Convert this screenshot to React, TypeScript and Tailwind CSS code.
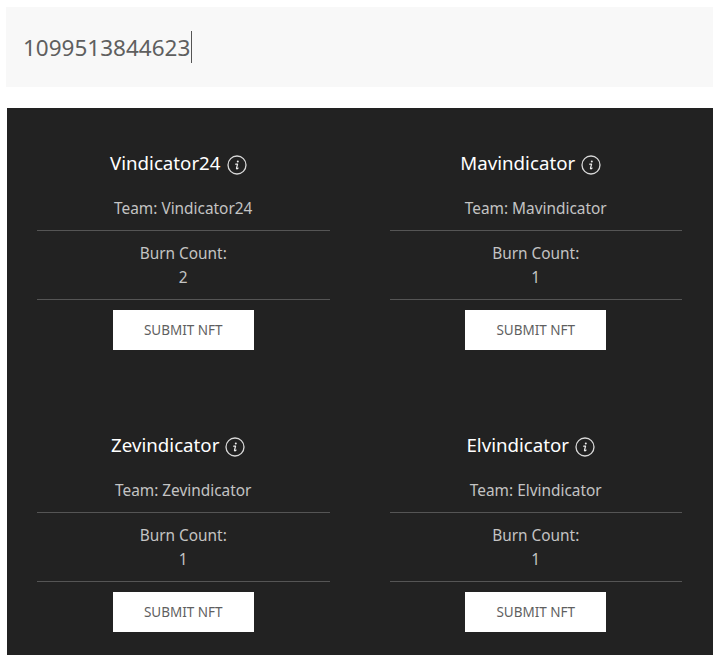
const font = "font-['Noto_Sans',sans-serif]";

function InfoIcon() {
  return (
    <svg width="20" height="20" viewBox="0 0 20 20" fill="none" className="mt-[3px] shrink-0">
      <circle cx="10" cy="10" r="9" stroke="#d8d8d8" strokeWidth="1.3" />
      <circle cx="10.8" cy="6.4" r="1" fill="#eeeeee" />
      <path d="M8.7 9.2h1.9l-1.1 3.9c-.1.5.1.7.4.7.4 0 .8-.3 1.1-.7" stroke="#eeeeee" strokeWidth="1.2" strokeLinecap="round" strokeLinejoin="round" />
    </svg>
  );
}

function Card({ name, count }: { name: string; count: number }) {
  return (
    <div className="flex flex-col items-center">
      <div className="flex h-[30px] items-center gap-[6px] pr-[10px]">
        <span className="text-[18.7px] leading-[30px] text-white">{name}</span>
        <InfoIcon />
      </div>
      <div className="mt-[15px] h-[38px] w-full border-b border-[#555] text-center text-[15.4px] leading-[32px] text-[#c4c4c4]">
        Team: {name}
      </div>
      <div className="w-full border-b border-[#555] pb-[9px] pt-[11px] text-center text-[15.4px] leading-[24px] text-[#c4c4c4]">
        <div>Burn Count:</div>
        <div>{count}</div>
      </div>
      <div className="mt-[10px] flex h-[40px] w-[141px] items-center justify-center bg-white text-[13.5px] text-[#5f5f5f]">
        SUBMIT NFT
      </div>
    </div>
  );
}

export default function App() {
  return (
    <div className={`${font} h-[655px] w-[720px] overflow-hidden bg-white pt-[7px]`}>
      <div className="ml-[6px] flex h-[80px] w-[707px] items-center bg-[#f8f8f8] pl-[17px] text-[22.5px] text-[#5f5f5f]">
        <span className="mt-[2px]">1099513844623</span>
        <span className="ml-[1px] h-[32px] w-px bg-[#555]" />
      </div>
      <div className="ml-[7px] mt-[21px] grid h-[547px] w-[706px] grid-cols-2 content-start gap-x-[60px] gap-y-[80px] bg-[#222222] pl-[30px] pr-[31px] pt-[40px]">
        <Card name="Vindicator24" count={2} />
        <Card name="Mavindicator" count={1} />
        <Card name="Zevindicator" count={1} />
        <Card name="Elvindicator" count={1} />
      </div>
    </div>
  );
}
